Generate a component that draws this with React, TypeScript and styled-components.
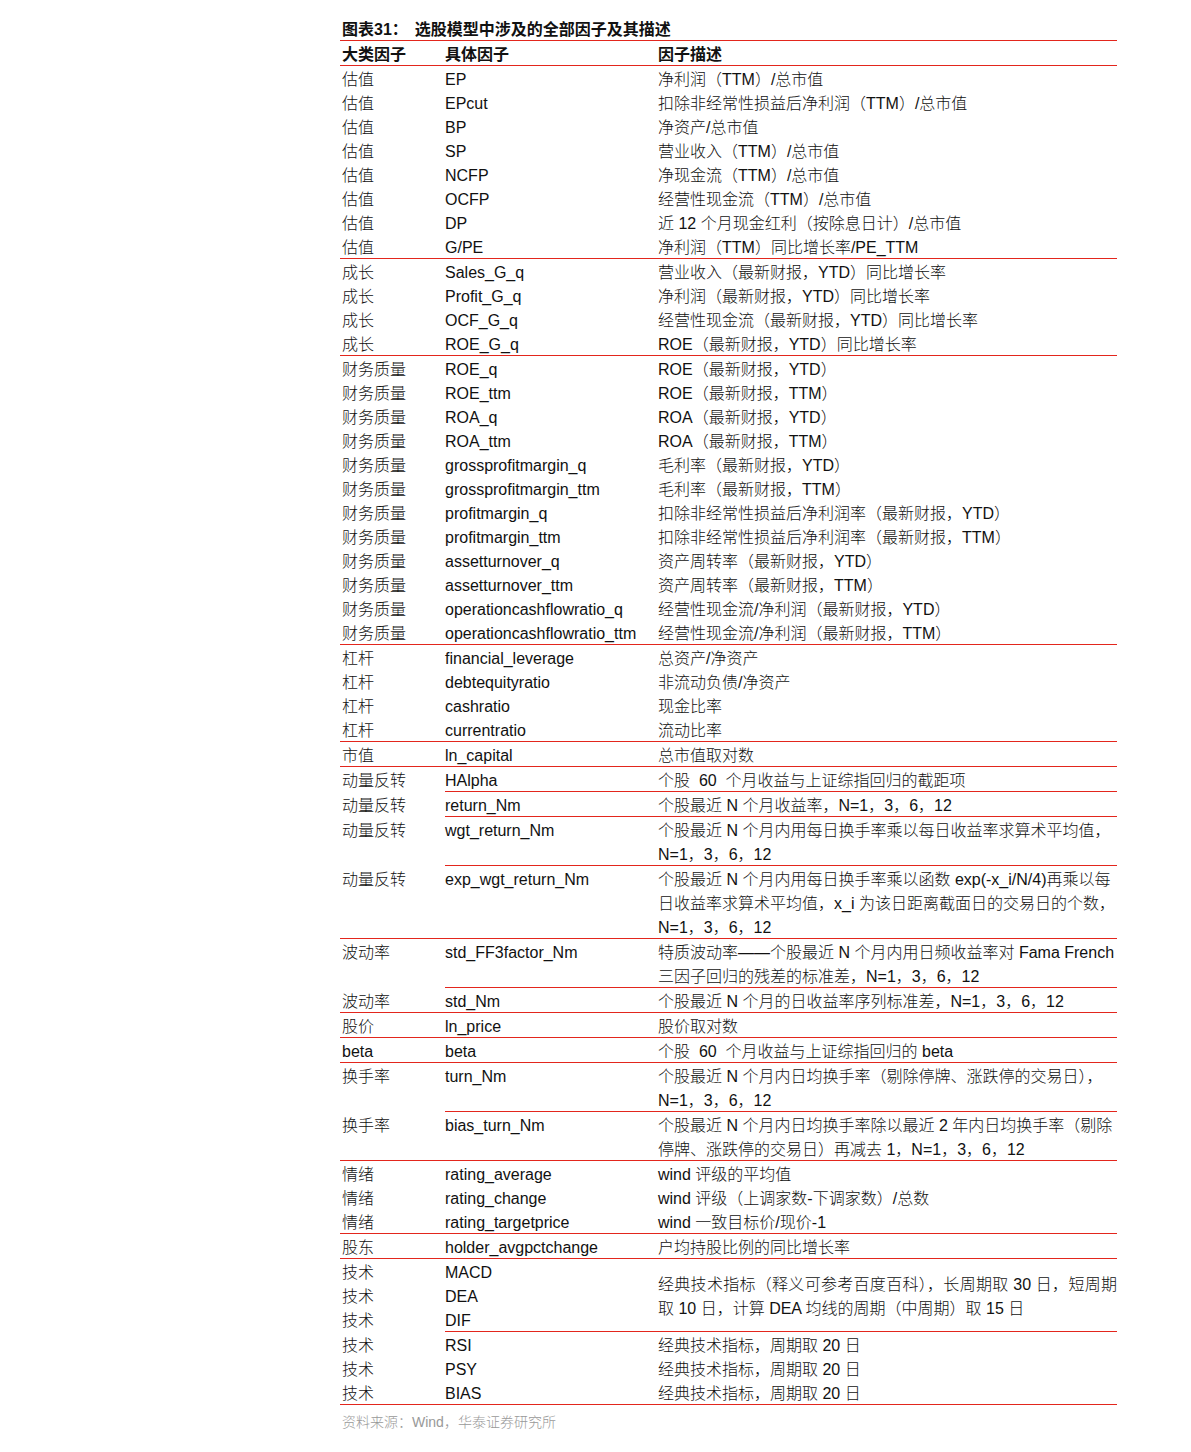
import styled, { createGlobalStyle } from "styled-components";

const RED = "#e3261d";

const GlobalStyle = createGlobalStyle`
    body {
        margin: 0;
        background: #fff;
    }
`;

const Page = styled.div`
    padding: 16px 0 20px 340px;
    font-family: "Liberation Sans", "Noto Sans CJK SC", sans-serif;
    font-size: 16px;
    font-weight: 300;
    color: #111;
`;

const Sheet = styled.div`
    width: 777px;
`;

const Title = styled.div`
    display: flex;
    gap: 7px;
    height: 21px;
    padding: 3px 0 0 2px;
    line-height: 21px;
    font-weight: bold;
    border-bottom: 1px solid ${RED};
`;

const HeaderRow = styled.div`
    display: grid;
    grid-template-columns: 105px 207px 1fr;
    height: 24px;
    font-weight: bold;
    border-bottom: 1px solid ${RED};
`;

const HeadCell = styled.div<{ $pad: number }>`
    padding: 4px 0 0 ${(p) => p.$pad}px;
    line-height: 20px;
`;

const Group = styled.div`
    border-bottom: 1px solid ${RED};
`;

const Entry = styled.div`
    display: flex;
`;

const CatCell = styled.div`
    width: 105px;
    flex-shrink: 0;
    padding-left: 2px;
    box-sizing: border-box;
`;

const Body = styled.div<{ $rule?: boolean }>`
    flex: 1;
    display: flex;
    border-bottom: ${(p) => (p.$rule ? `1px solid ${RED}` : "none")};
`;

const NameCell = styled.div`
    width: 207px;
    flex-shrink: 0;
`;

const DescCell = styled.div`
    flex: 1;
    padding-left: 6px;
    display: flex;
    flex-direction: column;
    justify-content: center;
`;

const Line = styled.div<{ $justify?: boolean }>`
    height: 24px;
    box-sizing: border-box;
    padding-top: 4px;
    line-height: 20px;
    white-space: pre;
    text-align-last: ${(p) => (p.$justify ? "justify" : "auto")};
`;

const Source = styled.div`
    margin-top: 6px;
    padding-left: 2px;
    line-height: 22px;
    font-size: 14px;
    color: #999;
`;

type Item = { cat: string; names: string[]; desc: string[]; rule?: boolean; justify?: boolean };

const one = (cat: string, name: string, desc: string, rule?: boolean): Item => ({
    cat,
    names: [name],
    desc: [desc],
    rule,
});

const N = "N=1，3，6，12";

const groups: Item[][] = [
    [
        one("估值", "EP", "净利润（TTM）/总市值"),
        one("估值", "EPcut", "扣除非经常性损益后净利润（TTM）/总市值"),
        one("估值", "BP", "净资产/总市值"),
        one("估值", "SP", "营业收入（TTM）/总市值"),
        one("估值", "NCFP", "净现金流（TTM）/总市值"),
        one("估值", "OCFP", "经营性现金流（TTM）/总市值"),
        one("估值", "DP", "近 12 个月现金红利（按除息日计）/总市值"),
        one("估值", "G/PE", "净利润（TTM）同比增长率/PE_TTM"),
    ],
    [
        one("成长", "Sales_G_q", "营业收入（最新财报，YTD）同比增长率"),
        one("成长", "Profit_G_q", "净利润（最新财报，YTD）同比增长率"),
        one("成长", "OCF_G_q", "经营性现金流（最新财报，YTD）同比增长率"),
        one("成长", "ROE_G_q", "ROE（最新财报，YTD）同比增长率"),
    ],
    [
        one("财务质量", "ROE_q", "ROE（最新财报，YTD）"),
        one("财务质量", "ROE_ttm", "ROE（最新财报，TTM）"),
        one("财务质量", "ROA_q", "ROA（最新财报，YTD）"),
        one("财务质量", "ROA_ttm", "ROA（最新财报，TTM）"),
        one("财务质量", "grossprofitmargin_q", "毛利率（最新财报，YTD）"),
        one("财务质量", "grossprofitmargin_ttm", "毛利率（最新财报，TTM）"),
        one("财务质量", "profitmargin_q", "扣除非经常性损益后净利润率（最新财报，YTD）"),
        one("财务质量", "profitmargin_ttm", "扣除非经常性损益后净利润率（最新财报，TTM）"),
        one("财务质量", "assetturnover_q", "资产周转率（最新财报，YTD）"),
        one("财务质量", "assetturnover_ttm", "资产周转率（最新财报，TTM）"),
        one("财务质量", "operationcashflowratio_q", "经营性现金流/净利润（最新财报，YTD）"),
        one("财务质量", "operationcashflowratio_ttm", "经营性现金流/净利润（最新财报，TTM）"),
    ],
    [
        one("杠杆", "financial_leverage", "总资产/净资产"),
        one("杠杆", "debtequityratio", "非流动负债/净资产"),
        one("杠杆", "cashratio", "现金比率"),
        one("杠杆", "currentratio", "流动比率"),
    ],
    [one("市值", "ln_capital", "总市值取对数")],
    [
        one("动量反转", "HAlpha", "个股  60  个月收益与上证综指回归的截距项", true),
        one("动量反转", "return_Nm", `个股最近 N 个月收益率，${N}`, true),
        {
            cat: "动量反转",
            names: ["wgt_return_Nm"],
            desc: ["个股最近 N 个月内用每日换手率乘以每日收益率求算术平均值，", N],
            rule: true,
        },
        {
            cat: "动量反转",
            names: ["exp_wgt_return_Nm"],
            desc: [
                "个股最近 N 个月内用每日换手率乘以函数 exp(-x_i/N/4)再乘以每",
                "日收益率求算术平均值，x_i 为该日距离截面日的交易日的个数，",
                N,
            ],
        },
    ],
    [
        {
            cat: "波动率",
            names: ["std_FF3factor_Nm"],
            desc: ["特质波动率——个股最近 N 个月内用日频收益率对 Fama French", `三因子回归的残差的标准差，${N}`],
            rule: true,
        },
        one("波动率", "std_Nm", `个股最近 N 个月的日收益率序列标准差，${N}`),
    ],
    [one("股价", "ln_price", "股价取对数")],
    [one("beta", "beta", "个股  60  个月收益与上证综指回归的 beta")],
    [
        {
            cat: "换手率",
            names: ["turn_Nm"],
            desc: ["个股最近 N 个月内日均换手率（剔除停牌、涨跌停的交易日），", N],
            rule: true,
        },
        {
            cat: "换手率",
            names: ["bias_turn_Nm"],
            desc: ["个股最近 N 个月内日均换手率除以最近 2 年内日均换手率（剔除", `停牌、涨跌停的交易日）再减去 1，${N}`],
        },
    ],
    [
        one("情绪", "rating_average", "wind 评级的平均值"),
        one("情绪", "rating_change", "wind 评级（上调家数-下调家数）/总数"),
        one("情绪", "rating_targetprice", "wind 一致目标价/现价-1"),
    ],
    [one("股东", "holder_avgpctchange", "户均持股比例的同比增长率")],
    [
        {
            cat: "技术",
            names: ["MACD", "DEA", "DIF"],
            desc: ["经典技术指标（释义可参考百度百科），长周期取 30 日，短周期", "取 10 日，计算 DEA 均线的周期（中周期）取 15 日"],
            rule: true,
            justify: true,
        },
        one("技术", "RSI", "经典技术指标，周期取 20 日"),
        one("技术", "PSY", "经典技术指标，周期取 20 日"),
        one("技术", "BIAS", "经典技术指标，周期取 20 日"),
    ],
];

function FactorEntry({ item }: { item: Item }) {
    return (
        <Entry>
            <CatCell>
                {item.names.map((n) => (
                    <Line key={n}>{item.cat}</Line>
                ))}
            </CatCell>
            <Body $rule={item.rule}>
                <NameCell>
                    {item.names.map((n) => (
                        <Line key={n}>{n}</Line>
                    ))}
                </NameCell>
                <DescCell>
                    {item.desc.map((d, i) => (
                        <Line key={i} $justify={item.justify && i === 0}>
                            {d}
                        </Line>
                    ))}
                </DescCell>
            </Body>
        </Entry>
    );
}

export default function App() {
    return (
        <Page>
            <GlobalStyle />
            <Sheet>
                <Title>
                    <span>图表31：</span>
                    <span>选股模型中涉及的全部因子及其描述</span>
                </Title>
                <HeaderRow>
                    <HeadCell $pad={2}>大类因子</HeadCell>
                    <HeadCell $pad={0}>具体因子</HeadCell>
                    <HeadCell $pad={6}>因子描述</HeadCell>
                </HeaderRow>
                {groups.map((g, gi) => (
                    <Group key={gi}>
                        {g.map((item) => (
                            <FactorEntry key={item.names[0]} item={item} />
                        ))}
                    </Group>
                ))}
                <Source>资料来源：Wind，华泰证券研究所</Source>
            </Sheet>
        </Page>
    );
}
